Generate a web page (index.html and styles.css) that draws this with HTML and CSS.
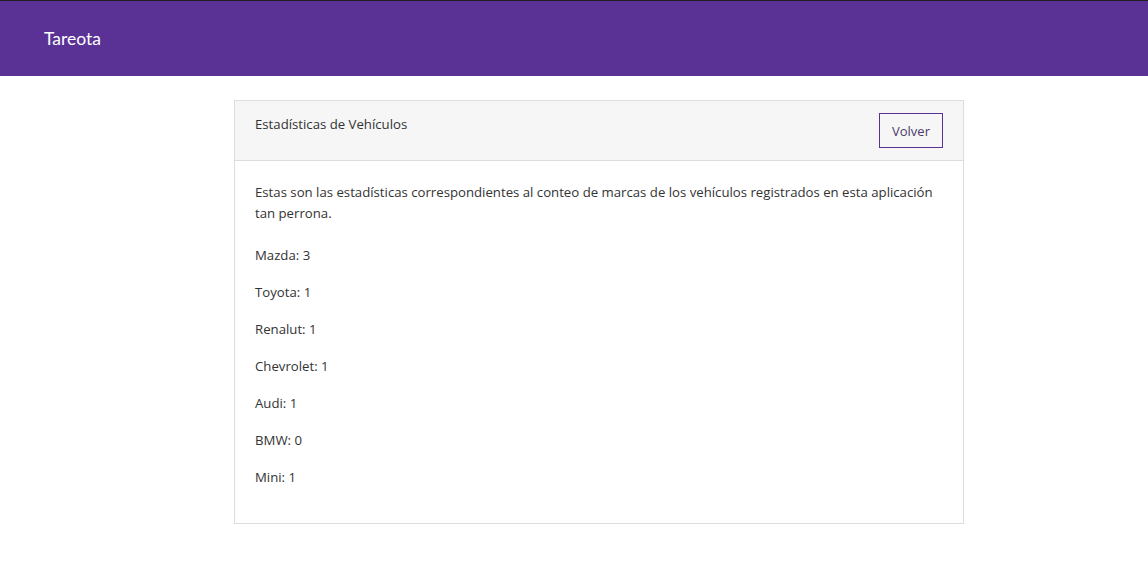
FILE: index.html
```html
<!DOCTYPE html>
<html lang="es">
<head>
<meta charset="utf-8">
<title>Tareota</title>
<link rel="stylesheet" href="styles.css">
</head>
<body>
<header class="navbar">
  <span class="brand">Tareota</span>
</header>
<main class="main">
  <section class="card">
    <div class="card-header">
      <span class="card-title">Estadísticas de Vehículos</span>
      <button class="btn-volver">Volver</button>
    </div>
    <div class="card-body">
      <p class="intro">Estas son las estadísticas correspondientes al conteo de marcas de los vehículos registrados en esta aplicación tan perrona.</p>
      <p class="stat">Mazda: 3</p>
      <p class="stat">Toyota: 1</p>
      <p class="stat">Renalut: 1</p>
      <p class="stat">Chevrolet: 1</p>
      <p class="stat">Audi: 1</p>
      <p class="stat">BMW: 0</p>
      <p class="stat">Mini: 1</p>
    </div>
  </section>
</main>
</body>
</html>
```
FILE: styles.css
```css
* { box-sizing: border-box; }
html, body { margin: 0; padding: 0; background: #fff; }
body {
  font-family: "Open Sans", "Noto Sans", sans-serif;
  font-size: 13.2px;
  color: #333;
}
.navbar {
  height: 76px;
  background: #5a3295;
  border-top: 1px solid #1e1e1e;
  display: flex;
  align-items: center;
  padding-left: 44px;
}
.brand {
  font-family: Lato, sans-serif;
  font-size: 17.5px;
  color: #fff;
  margin-top: 0;
}
.main {
  padding: 24px 0 0 234px;
}
.card {
  width: 730px;
  border: 1px solid #dddddd;
}
.card-header {
  background: #f6f6f6;
  border-bottom: 1px solid #dddddd;
  height: 60px;
  display: flex;
  justify-content: space-between;
  padding: 14px 20px 0 20px;
}
.card-title {
  line-height: 18px;
}
.btn-volver {
  margin-top: -2px;
  width: 64px;
  height: 35px;
  background: transparent;
  border: 1px solid #5a3295;
  font-family: inherit;
  font-size: 13px;
  color: #4a3a6a;
  padding: 0;
  cursor: pointer;
}
.card-body {
  padding: 21px 20px 35px 20px;
}
.card-body p {
  margin: 0;
  line-height: 21px;
}
.intro { margin-bottom: 21px !important; }
.stat { margin-bottom: 16px !important; }
.stat:last-child { margin-bottom: 0 !important; }
```
